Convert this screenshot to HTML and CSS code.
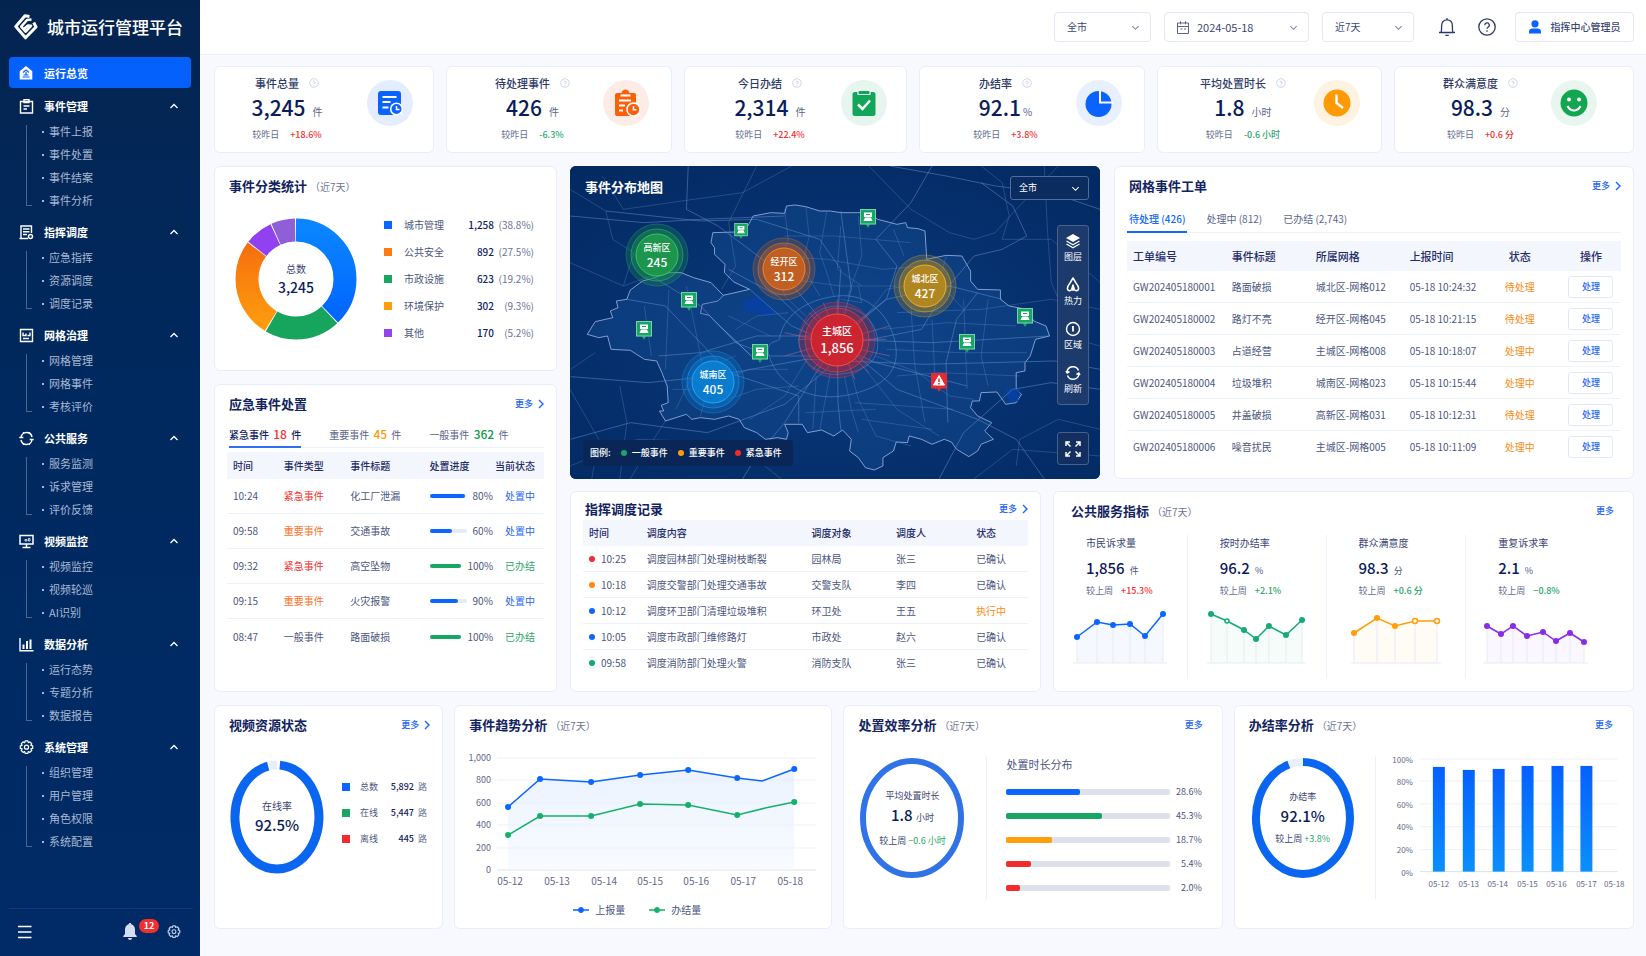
FILE: index.html
```html
<!DOCTYPE html>
<html lang="zh-CN">
<head>
    <meta charset="UTF-8">
    <meta name="viewport" content="width=device-width, initial-scale=1.0">
    <title>城市运行管理平台</title>
    <link rel="stylesheet" href="styles.css">
</head>
<body>
    <svg class="sprite" aria-hidden="true">
        <symbol id="up" viewBox="0 0 10 10"><path d="M1.5 7 5 3.5 8.500 7" fill="none" stroke="currentColor" stroke-width="1.300"/></symbol>
        <symbol id="down" viewBox="0 0 10 10"><path d="M1.500 3.500 5 7 8.500 3.500" fill="none" stroke="currentColor" stroke-width="1.200"/></symbol>
        <symbol id="right" viewBox="0 0 6 10"><path d="M1 1 5 5 1 9" fill="none" stroke="currentColor" stroke-width="1.400"/></symbol>
        <symbol id="help" viewBox="0 0 10 10"><circle cx="5" cy="5" r="4.300" fill="none" stroke="currentColor" stroke-width=".8"/><path d="M3.800 4.200a1.200 1.200 0 1 1 1.200 1.300v.6M5 7v.8" fill="none" stroke="currentColor" stroke-width=".8"/></symbol>
        <symbol id="gear" viewBox="0 0 16 16"><path d="M6.600 1h2.800l.5 1.900 1.700-.9 2 2-.9 1.700 1.900.5v2.800l-1.900.5.900 1.700-2 2-1.700-.9-.5 1.900H6.600l-.5-1.900-1.700.9-2-2 .9-1.700L1.400 9V6.200l1.900-.5-.9-1.700 2-2 1.700.9z" fill="none" stroke="currentColor" stroke-width="1.300" stroke-linejoin="round"/><circle cx="8" cy="7.600" r="2.200" fill="none" stroke="currentColor" stroke-width="1.300"/></symbol>
        <symbol id="pin" viewBox="0 0 16 20"><path d="M0 0h16v15.500h-6L8 19l-2-3.500H0z" fill="currentColor"/><rect x=".5" y=".5" width="15" height="14.500" fill="none" stroke="#fff" stroke-opacity=".45"/><path d="M4 3.500h8v4.500H4zM6 9h4M3.500 12l1.500-3.500h6l1.500 3.500z" fill="#fff"/><path d="M6 5.500h4" stroke="currentColor"/></symbol>
    </svg>

    <aside class="sidebar">
        <div class="brand">
            <svg width="24" height="26" viewBox="0 0 24 26" fill="none" stroke="#fff" stroke-linejoin="round"><path d="M15.500 2.500 11 1.800 1.800 12.500l9.700 11.300L22 13l-2.300-4.500" stroke-width="3"/><path d="M17.500 5.500 13 6 7.200 12.600l4.500 5 5.300-5.800-3-.3-3.500 3" stroke-width="2.600"/></svg>
            <span>城市运行管理平台</span>
        </div>
        <nav class="menu">
            <a class="menu-home" href="#">
                <svg width="14" height="14" viewBox="0 0 14 14"><path d="M7 0 13.300 5.200V13.500H.7V5.200z" fill="#fff"/><path d="M4 6.500 7 4l3 2.500M4.500 9h5M3.500 11h7M7 6v3" fill="none" stroke="#0a5cf5" stroke-width="1.200"/></svg>
                <span>运行总览</span>
            </a>
            <section class="group">
                <button class="group-head" type="button">
                    <svg width="15" height="15" viewBox="0 0 15 15" fill="none" stroke="#fff" stroke-width="1.400"><path d="M1.500 2.500h12V14h-12zM5 .5h5v3H5zM4.500 7h6M4.500 10h3.500"/></svg>
                    <span>事件管理</span><svg class="caret"><use href="#up"/></svg>
                </button>
                <ul><li><a href="#">事件上报</a></li><li><a href="#">事件处置</a></li><li><a href="#">事件结案</a></li><li><a href="#">事件分析</a></li></ul>
            </section>
            <section class="group">
                <button class="group-head" type="button">
                    <svg width="15" height="15" viewBox="0 0 15 15" fill="none" stroke="#fff" stroke-width="1.400"><path d="M8 13.500H2V1h10.500v7M4 4h6.500M4 6.800h6.500M4 9.500h4M.5 13.500H9"/><circle cx="11.500" cy="11.500" r="2"/></svg>
                    <span>指挥调度</span><svg class="caret"><use href="#up"/></svg>
                </button>
                <ul><li><a href="#">应急指挥</a></li><li><a href="#">资源调度</a></li><li><a href="#">调度记录</a></li></ul>
            </section>
            <section class="group">
                <button class="group-head" type="button">
                    <svg width="15" height="15" viewBox="0 0 15 15" fill="none" stroke="#fff" stroke-width="1.400"><path d="M1.500 1.500h12v12h-12zM4 4.500v3h3v-2M8.500 7.500h2.500v-3M4 10.500h6"/></svg>
                    <span>网格治理</span><svg class="caret"><use href="#up"/></svg>
                </button>
                <ul><li><a href="#">网格管理</a></li><li><a href="#">网格事件</a></li><li><a href="#">考核评价</a></li></ul>
            </section>
            <section class="group">
                <button class="group-head" type="button">
                    <svg width="15" height="15" viewBox="0 0 15 15" fill="none" stroke="#fff" stroke-width="1.500"><path d="M2 6.500C2.300 3.800 4.500 1.500 7.500 1.500s5 2 5.500 4.500M13 8.500c-.3 2.700-2.500 5-5.500 5s-5-2-5.500-4.500M.3 6.500h4M10.700 8.500h4"/><path d="M4.500 1v2M10.500 1v2M4.500 12v2M10.500 12v2" stroke-width="1.200"/></svg>
                    <span>公共服务</span><svg class="caret"><use href="#up"/></svg>
                </button>
                <ul><li><a href="#">服务监测</a></li><li><a href="#">诉求管理</a></li><li><a href="#">评价反馈</a></li></ul>
            </section>
            <section class="group">
                <button class="group-head" type="button">
                    <svg width="15" height="15" viewBox="0 0 15 15" fill="none" stroke="#fff" stroke-width="1.500"><path d="M1 1.500h13v8.500H1zM3.500 13.500h8M7.500 10v3"/><path d="M6 5.500h2v1.500H6zM9.500 4.500h1.500V7H9.500z" stroke-width=".8"/></svg>
                    <span>视频监控</span><svg class="caret"><use href="#up"/></svg>
                </button>
                <ul><li><a href="#">视频监控</a></li><li><a href="#">视频轮巡</a></li><li><a href="#">AI识别</a></li></ul>
            </section>
            <section class="group">
                <button class="group-head" type="button">
                    <svg width="15" height="15" viewBox="0 0 15 15" fill="none" stroke="#fff"><path d="M1 1v12.700h13.500" stroke-width="1.400"/><path d="M4.500 7.500V12M8 4v8M11.500 2.500V12" stroke-width="2"/></svg>
                    <span>数据分析</span><svg class="caret"><use href="#up"/></svg>
                </button>
                <ul><li><a href="#">运行态势</a></li><li><a href="#">专题分析</a></li><li><a href="#">数据报告</a></li></ul>
            </section>
            <section class="group">
                <button class="group-head" type="button">
                    <svg width="15" height="15"><use href="#gear"/></svg>
                    <span>系统管理</span><svg class="caret"><use href="#up"/></svg>
                </button>
                <ul><li><a href="#">组织管理</a></li><li><a href="#">用户管理</a></li><li><a href="#">角色权限</a></li><li><a href="#">系统配置</a></li></ul>
            </section>
        </nav>
        <div class="side-foot">
            <button type="button" class="icon-btn" aria-label="收起菜单"><svg width="14" height="14" viewBox="0 0 14 14"><path d="M0 1.500h13.500M0 7h13.500M0 12.500h13.500" stroke="#fff" stroke-width="1.600"/></svg></button>
            <button type="button" class="icon-btn side-bell" aria-label="消息">
                <svg width="14" height="17" viewBox="0 0 14 17" fill="#d4def2"><path d="M7 0c.8 0 1.300.5 1.300 1.300C10.800 1.900 12 4 12 6.500v4.500l1.700 2v1H.3v-1L2 11V6.500C2 4 3.200 1.900 5.700 1.300 5.700.5 6.200 0 7 0zM5 15h4a2 2 0 0 1-4 0z"/></svg>
                <span class="badge">12</span>
            </button>
            <button type="button" class="icon-btn side-gear" aria-label="设置"><svg width="14" height="14"><use href="#gear"/></svg></button>
        </div>
    </aside>

    <div class="page">
        <header class="topbar">
            <label class="picker picker-city"><select aria-label="区域"><option>全市</option></select><svg class="picker-arrow"><use href="#down"/></svg></label>
            <label class="picker picker-date">
                <svg class="picker-icon" width="12" height="13" viewBox="0 0 12 13" fill="none" stroke="#59638a"><path d="M.5 2h11v10.500H.5zM.5 5.500h11M3.500.3v3M8.500.3v3M3.500 8h2M7 8h2"/></svg>
                <input type="text" value="2024-05-18" aria-label="日期"><svg class="picker-arrow"><use href="#down"/></svg>
            </label>
            <label class="picker picker-range"><select aria-label="时间范围"><option>近7天</option></select><svg class="picker-arrow"><use href="#down"/></svg></label>
            <button type="button" class="icon-btn top-bell" aria-label="通知"><svg width="18" height="20" viewBox="0 0 18 20" fill="none" stroke="#2c3968" stroke-width="1.300"><path d="M1 15.500h16M3 15.500c.6-1 .6-2 .6-6.500C3.600 5.300 5.700 2.800 9 2.800s5.400 2.500 5.400 6.200c0 4.500 0 5.500.6 6.500M9 2.800V1M7.300 18.300h3.400"/></svg></button>
            <button type="button" class="icon-btn top-help" aria-label="帮助"><svg width="18" height="18" viewBox="0 0 18 18" fill="none" stroke="#2c3968" stroke-width="1.300"><circle cx="9" cy="9" r="8.200"/><path d="M6.700 7.200a2.300 2.300 0 1 1 3.300 2c-.7.4-1 .8-1 1.600M9 12.300v1.400"/></svg></button>
            <button type="button" class="user"><svg width="12" height="14" viewBox="0 0 12 14" fill="#0a62ff"><circle cx="6" cy="3.800" r="3.600"/><path d="M0 13.500V11.500C0 9.700 1.500 8.500 3.500 8.500h5c2 0 3.500 1.200 3.500 3v2z"/></svg>指挥中心管理员</button>
        </header>

        <main class="content">
            <section class="kpis">
                <article class="card kpi">
                    <div class="kpi-text">
                        <h2>事件总量<svg class="hint"><use href="#help"/></svg></h2>
                        <p class="kpi-num"><b>3,245</b>件</p>
                        <p class="delta">较昨日<span class="red">+18.6%</span></p>
                    </div>
                    <svg class="kpi-icon" viewBox="0 0 46 46"><circle cx="23" cy="23" r="23" fill="#e4edfd"/><rect x="11" y="11" width="23" height="24" rx="3" fill="#0a62ff"/><path d="M15.500 17h14M15.500 22h8M15.500 27.500h6" stroke="#fff" stroke-width="2"/><circle cx="29.500" cy="29" r="5.800" fill="#0a62ff" stroke="#fff" stroke-width="1.600"/><path d="M29.500 26v3.500h3M33 32.500l2.500 2.500" fill="none" stroke="#fff" stroke-width="1.500"/></svg>
                </article>
                <article class="card kpi">
                    <div class="kpi-text">
                        <h2>待处理事件<svg class="hint"><use href="#help"/></svg></h2>
                        <p class="kpi-num"><b>426</b>件</p>
                        <p class="delta">较昨日<span class="green">-6.3%</span></p>
                    </div>
                    <svg class="kpi-icon" viewBox="0 0 46 46"><circle cx="23" cy="23" r="23" fill="#fdece6"/><path d="M14 13h4.500c.5-2 2-3.500 4-3.500s3.500 1.500 4 3.500H31q2 0 2 2v19q0 2-2 2H14q-2 0-2-2V15q0-2 2-2z" fill="#fb5f0c"/><path d="M17.500 15.500h10M16 20.500h12M16 25.500h6M16 30.500h4" stroke="#fff" stroke-width="1.800"/><circle cx="30.500" cy="29.500" r="6.500" fill="#fb5f0c" stroke="#fff" stroke-width="1.500"/><path d="M30.500 26v3.700h3" fill="none" stroke="#fff" stroke-width="1.500"/></svg>
                </article>
                <article class="card kpi">
                    <div class="kpi-text">
                        <h2>今日办结<svg class="hint"><use href="#help"/></svg></h2>
                        <p class="kpi-num"><b>2,314</b>件</p>
                        <p class="delta">较昨日<span class="red">+22.4%</span></p>
                    </div>
                    <svg class="kpi-icon" viewBox="0 0 46 46"><circle cx="23" cy="23" r="23" fill="#e6f5ee"/><rect x="11.500" y="12" width="23" height="24" rx="2.500" fill="#12a65b"/><path d="M17 10.500h12v4H17z" fill="#12a65b" stroke="#e6f5ee" stroke-width="1.200"/><path d="m17 24.500 4.500 4.500 7.500-8.500" fill="none" stroke="#fff" stroke-width="2.500"/></svg>
                </article>
                <article class="card kpi">
                    <div class="kpi-text">
                        <h2>办结率<svg class="hint"><use href="#help"/></svg></h2>
                        <p class="kpi-num percent"><b>92.1</b>%</p>
                        <p class="delta">较昨日<span class="red">+3.8%</span></p>
                    </div>
                    <svg class="kpi-icon" viewBox="0 0 46 46"><circle cx="23" cy="23" r="23" fill="#e8effd"/><circle cx="22.500" cy="24" r="13" fill="#0a62ff"/><path d="M24 10v12.500h13" fill="none" stroke="#fff" stroke-width="2"/></svg>
                </article>
                <article class="card kpi">
                    <div class="kpi-text">
                        <h2>平均处置时长<svg class="hint"><use href="#help"/></svg></h2>
                        <p class="kpi-num"><b>1.8</b>小时</p>
                        <p class="delta">较昨日<span class="green">-0.6 小时</span></p>
                    </div>
                    <svg class="kpi-icon" viewBox="0 0 46 46"><circle cx="23" cy="23" r="23" fill="#fef2e0"/><circle cx="23" cy="23" r="13.500" fill="#ff9a05"/><path d="M22.500 14.500V23l6.500 5" fill="none" stroke="#fff" stroke-width="2.400"/></svg>
                </article>
                <article class="card kpi">
                    <div class="kpi-text">
                        <h2>群众满意度<svg class="hint"><use href="#help"/></svg></h2>
                        <p class="kpi-num"><b>98.3</b>分</p>
                        <p class="delta">较昨日<span class="red">+0.6 分</span></p>
                    </div>
                    <svg class="kpi-icon" viewBox="0 0 46 46"><circle cx="23" cy="23" r="23" fill="#e9f6ef"/><circle cx="23" cy="23" r="13.500" fill="#12a650"/><circle cx="18" cy="19.500" r="2" fill="#fff"/><circle cx="28" cy="19.500" r="2" fill="#fff"/><path d="M16.500 26c3 6 10 6 13 0" fill="none" stroke="#fff" stroke-width="2"/></svg>
                </article>
            </section>

            <section class="middle">
                <div class="left-col">
                    <article class="card">
                        <header class="card-head"><h3>事件分类统计<small>（近7天）</small></h3></header>
                        <div class="category">
                            <div class="ring-box">
                                <svg width="124" height="124" viewBox="0 0 124 124">
                                    <defs>
                                        <linearGradient id="gBlue" x1="1" x2="0"><stop stop-color="#0a84ff"/><stop offset="1" stop-color="#0062ff"/></linearGradient>
                                        <linearGradient id="gOrange" x1="0" x2="1"><stop stop-color="#ff9d0d"/><stop offset="1" stop-color="#f4660f"/></linearGradient>
                                    </defs>
                                    <g class="slices" fill="none" stroke-width="23" transform="rotate(-90 62 62)">
                                        <circle cx="62" cy="62" r="49" pathLength="360" stroke="url(#gBlue)" stroke-dasharray="136 224"/>
                                        <circle cx="62" cy="62" r="49" pathLength="360" stroke="#17a45c" stroke-dasharray="73 287" stroke-dashoffset="-137"/>
                                        <circle cx="62" cy="62" r="49" pathLength="360" stroke="url(#gOrange)" stroke-dasharray="96 264" stroke-dashoffset="-211"/>
                                        <circle cx="62" cy="62" r="49" pathLength="360" stroke="#9141f0" stroke-dasharray="27 333" stroke-dashoffset="-308"/>
                                        <circle cx="62" cy="62" r="49" pathLength="360" stroke="#8f5fd8" stroke-dasharray="23 337" stroke-dashoffset="-336"/>
                                    </g>
                                </svg>
                                <div class="ring-text"><span>总数</span><b class="mid">3,245</b></div>
                            </div>
                            <ul class="legend">
                                <li><i class="sq bg-blue"></i><span>城市管理</span><b>1,258</b><em>(38.8%)</em></li>
                                <li><i class="sq bg-orange"></i><span>公共安全</span><b>892</b><em>(27.5%)</em></li>
                                <li><i class="sq bg-green"></i><span>市政设施</span><b>623</b><em>(19.2%)</em></li>
                                <li><i class="sq bg-amber"></i><span>环境保护</span><b>302</b><em>(9.3%)</em></li>
                                <li><i class="sq bg-purple"></i><span>其他</span><b>170</b><em>(5.2%)</em></li>
                            </ul>
                        </div>
                    </article>

                    <article class="card grow">
                        <header class="card-head"><h3>应急事件处置</h3><a class="more" href="#">更多<svg><use href="#right"/></svg></a></header>
                        <div class="tabs tabs-count">
                            <button type="button" class="active">紧急事件 <b class="red">18</b> 件</button>
                            <button type="button">重要事件 <b class="amber">45</b> 件</button>
                            <button type="button">一般事件 <b class="green-d">362</b> 件</button>
                        </div>
                        <table class="table emergency">
                            <colgroup><col class="c-time"><col class="c-type"><col class="c-title"><col class="c-prog"><col class="c-state"></colgroup>
                            <thead><tr><th>时间</th><th>事件类型</th><th>事件标题</th><th>处置进度</th><th>当前状态</th></tr></thead>
                            <tbody>
                                <tr><td>10:24</td><td class="red">紧急事件</td><td>化工厂泄漏</td><td><div class="prog"><i><s class="bg-blue" style="width:95%"></s></i>80%</div></td><td class="blue">处置中</td></tr>
                                <tr><td>09:58</td><td class="orange">重要事件</td><td>交通事故</td><td><div class="prog"><i><s class="bg-blue" style="width:62%"></s></i>60%</div></td><td class="blue">处置中</td></tr>
                                <tr><td>09:32</td><td class="red">紧急事件</td><td>高空坠物</td><td><div class="prog"><i><s class="bg-green" style="width:100%"></s></i>100%</div></td><td class="green">已办结</td></tr>
                                <tr><td>09:15</td><td class="orange">重要事件</td><td>火灾报警</td><td><div class="prog"><i><s class="bg-blue" style="width:78%"></s></i>90%</div></td><td class="blue">处置中</td></tr>
                                <tr><td>08:47</td><td>一般事件</td><td>路面破损</td><td><div class="prog"><i><s class="bg-green" style="width:100%"></s></i>100%</div></td><td class="green">已办结</td></tr>
                            </tbody>
                        </table>
                    </article>
                </div>

                <div class="right-col">
                    <div class="row-map">
                        <article class="map">
                            <svg class="map-canvas" viewBox="0 0 530 313" preserveAspectRatio="xMidYMid slice">
                                <defs>
                                    <radialGradient id="mapBg" cx=".5" cy=".55" r=".7"><stop stop-color="#093a7e"/><stop offset="1" stop-color="#032a62"/></radialGradient>
                                </defs>
                                <rect width="530" height="313" fill="url(#mapBg)"/>
                                <g class="roads" transform="scale(.3508 .3333) translate(-28 -30)">
                                    <path class="district" d="M77 535 110 545 135 540 145 580 200 583 240 610 275 615 290 650 305 690 308 740 288 748 295 765 283 765 300 795 330 785 360 775 375 790 400 785 440 790 480 780 510 790 525 815 560 830 585 850 620 845 645 850 650 830 640 805 690 805 705 830 745 822 780 840 805 822 830 850 825 885 850 905 870 935 895 942 920 930 920 905 950 885 958 858 990 860 995 840 1030 850 1060 865 1095 850 1115 858 1130 880 1165 902 1190 885 1200 865 1235 850 1210 825 1230 800 1190 780 1170 755 1175 735 1195 735 1200 710 1245 708 1270 745 1300 740 1315 715 1300 700 1300 650 1325 645 1325 620 1340 600 1355 550 1395 540 1385 510 1350 495 1330 460 1280 450 1255 430 1255 402 1190 400 1170 375 1170 345 1145 300 1100 298 1045 310 1040 225 1020 218 990 215 985 200 960 205 905 190 880 170 800 170 770 165 740 165 700 152 670 147 645 150 640 172 600 170 550 180 535 210 500 228 435 230 430 260 440 275 440 295 470 325 468 350 495 378 540 400 465 418 430 380 380 365 345 350 310 350 260 368 235 375 200 402 190 430 160 435 165 455 143 465 150 485 100 497z"/>
                                    <path class="edge" d="M465 418 450 435 405 445 400 472 425 478 445 500 490 545 545 600"/>
                                    <path class="water" d="M520 440 560 420 620 470 600 480 530 465zM1270 695 1312 698 1305 735 1280 740z"/>
                                    <path class="main" d="M625 550C635 480 700 430 790 420S940 480 955 560 930 690 830 715 640 700 605 625 620 560 625 550zM680 550C690 500 730 450 790 450S900 490 905 555 860 650 790 655 680 600 680 550zM30 662 250 680 440 660 700 610 1040 625 1410 615 1539 640M30 850 200 800 420 830 640 745 760 640 830 520 930 430 1110 390 1260 430M130 165 400 195 560 190 740 250 800 340 790 500 792 740 800 822M365 30 360 160 450 210 640 360 790 550 960 700 1190 790 1300 850 1380 969M790 550 1060 560 1395 540M480 340 620 420 720 520M540 400 660 510 900 620 1160 690M800 165 830 400 790 550 700 700 640 800 560 900 520 969M1060 30 1000 140 900 250 960 330 930 430 830 510M28 180 240 200 400 190 640 180M190 430 300 450 400 560 480 650 680 720 680 800M260 360 400 450 500 560 600 600 780 600M1539 160 1400 110 1240 90 1100 60 940 30M1200 80 1290 150 1330 240 1260 280 1180 300 1100 400 1030 520 840 560M1539 700 1400 680 1290 700 1150 830 1080 969M1190 410 1130 490 1100 620 1105 800M280 600 400 590 560 540 720 540"/>
                                    <path class="minor" d="M28 100 130 165 150 250 210 290 180 390M28 320 180 390 260 360M28 700 110 850 90 969M200 969 260 860 300 795M28 930 220 850 500 860 630 969M120 60 180 160 380 130 520 110 660 30M560 30 480 200 500 330 460 400M880 30 1000 160 1110 230 1180 250 1240 230 1300 160 1420 30M1200 30 1260 80 1280 180 1260 250 1400 250 1539 380M1539 460 1400 430 1200 460 960 470M1539 820 1420 790 1310 850 1300 930M1180 969 1290 880 1539 900M1380 30 1390 240 1400 380 1470 550 1539 570M100 590 30 640M170 690 190 800 170 969M640 160 650 250 620 340 640 420M700 150 710 240 690 330 740 420M760 165 740 290 760 350 780 420M850 180 860 300 820 420M640 240 780 240 1000 260M600 300 760 310 920 340 1040 330M660 370 800 390 960 390M730 660 720 820M830 650 850 730 900 840 1000 870M870 640 960 760 1080 840M900 600 1020 650 1110 720 1180 730M920 520 1100 500 1300 510M930 580 1140 590 1330 590M960 660 1080 650 1310 660M1000 450 1010 620 1040 800M1060 490 1070 700M1150 430 1160 700M1220 430 1200 600 1220 690M680 690 560 700 450 740M650 640 540 640 400 700 320 700M650 470 560 480 500 520M700 480 640 420M880 470 930 400 1040 380M710 600 640 720 540 790M770 650 740 820M810 660 830 760 850 830M600 540 480 480M500 600 380 650 330 760M240 450 260 600M310 400 300 640M360 390 420 700 400 780M840 740 1120 760M860 790 1060 820M700 770 900 760M1100 300 1080 380 1150 460M950 220 980 300M800 210 790 340 860 390M850 390 860 440 800 430"/>
                                    <path class="spokes" d="M790 430V660M680 550H930M710 470 880 650M720 640 880 470M750 440 840 670M640 530 940 600M640 600 940 510"/>
                                </g>
                                <g class="bubble b-green" transform="translate(87 89)"><circle class="o2" r="31"/><circle class="o1" r="26"/><circle class="core" r="21"/><text y="-4">高新区</text><text class="n" y="12">245</text></g>
                                <g class="bubble b-orange" transform="translate(214 103)"><circle class="o2" r="31"/><circle class="o1" r="26"/><circle class="core" r="21"/><text y="-4">经开区</text><text class="n" y="12">312</text></g>
                                <g class="bubble b-gold" transform="translate(355 120)"><circle class="o2" r="31"/><circle class="o1" r="26"/><circle class="core" r="21"/><text y="-4">城北区</text><text class="n" y="12">427</text></g>
                                <g class="bubble b-red big" transform="translate(267 174)"><circle class="o2" r="38"/><circle class="o1" r="32"/><circle class="core" r="26"/><text y="-5">主城区</text><text class="n" y="13">1,856</text></g>
                                <g class="bubble b-blue" transform="translate(143 216)"><circle class="o2" r="31"/><circle class="o1" r="26"/><circle class="core" r="21"/><text y="-4">城南区</text><text class="n" y="12">405</text></g>
                                <g color="#16a765">
                                    <use href="#pin" x="164" y="57" width="14" height="17"/>
                                    <use href="#pin" x="290" y="43" width="16" height="20"/>
                                    <use href="#pin" x="111" y="126" width="16" height="20"/>
                                    <use href="#pin" x="66" y="155" width="16" height="20"/>
                                    <use href="#pin" x="182" y="178" width="16" height="20"/>
                                    <use href="#pin" x="447" y="142" width="16" height="20"/>
                                    <use href="#pin" x="389" y="168" width="16" height="20"/>
                                </g>
                                <g transform="translate(361 207)"><path d="M0 0h16v15.500h-6L8 19l-2-3.500H0z" fill="#e52a32"/><path d="M8 2.500 13.500 12h-11z" fill="#fff" stroke="#fff" stroke-linejoin="round"/><path d="M8 5.500v3.500M8 10v1.500" stroke="#e52a32" stroke-width="1.500"/></g>
                            </svg>
                            <h3>事件分布地图</h3>
                            <label class="map-select"><select aria-label="地图区域"><option>全市</option></select><svg class="picker-arrow"><use href="#down"/></svg></label>
                            <div class="map-tools">
                                <button type="button"><svg width="16" height="16" viewBox="0 0 16 16"><path d="M8 1 15 5 8 9 1 5z" fill="#fff"/><path d="m1.500 8 6.500 3.700L14.500 8M1.500 11 8 14.700 14.500 11" fill="none" stroke="#fff" stroke-width="1.300"/></svg>图层</button>
                                <button type="button"><svg width="16" height="16" viewBox="0 0 16 16" fill="none" stroke="#fff" stroke-width="1.500" stroke-linejoin="round"><path d="M8 1 5 6C3 8.500 2 10 2.500 12c.6 2.200 3.500 2.200 4.200.2L8 8l1.300 4.200c.7 2 3.600 2 4.200-.2.5-2-.5-3.500-2.500-6zM8 8v6"/></svg>热力</button>
                                <button type="button"><svg width="16" height="16" viewBox="0 0 16 16" fill="none" stroke="#fff" stroke-width="1.400"><circle cx="8" cy="8" r="6.500"/><path d="M8 5v5.500M7 6h1" stroke-width="1.800"/></svg>区域</button>
                                <button type="button"><svg width="16" height="16" viewBox="0 0 16 16" fill="none" stroke="#fff" stroke-width="1.500"><path d="M2 7a6 6 0 0 1 11.500-1.500M14 9a6 6 0 0 1-11.500 1.500M1 6l1.200 2L4.500 6.500M15 10l-1.200-2-2.300 1.500"/></svg>刷新</button>
                            </div>
                            <button type="button" class="map-full" aria-label="全屏"><svg width="16" height="16" viewBox="0 0 16 16" fill="none" stroke="#fff" stroke-width="1.500"><path d="M1 5V1h4M1 1l4.500 4.500M11 1h4v4M15 1l-4.500 4.500M1 11v4h4M1 15l4.500-4.500M15 11v4h-4M15 15l-4.500-4.500"/></svg></button>
                            <div class="map-legend"><span>图例:</span><span><i class="dot bg-green"></i>一般事件</span><span><i class="dot bg-amber"></i>重要事件</span><span><i class="dot bg-red"></i>紧急事件</span></div>
                        </article>

                        <article class="card">
                            <header class="card-head"><h3>网格事件工单</h3><a class="more" href="#">更多<svg><use href="#right"/></svg></a></header>
                            <div class="tabs tabs-order">
                                <button type="button" class="active">待处理 (426)</button>
                                <button type="button">处理中 (812)</button>
                                <button type="button">已办结 (2,743)</button>
                            </div>
                            <table class="table orders">
                                <colgroup><col class="o-id"><col class="o-title"><col class="o-grid"><col class="o-time"><col class="o-state"><col class="o-act"></colgroup>
                                <thead><tr><th>工单编号</th><th>事件标题</th><th>所属网格</th><th>上报时间</th><th>状态</th><th>操作</th></tr></thead>
                                <tbody>
                                    <tr><td>GW202405180001</td><td>路面破损</td><td>城北区-网格012</td><td>05-18 10:24:32</td><td class="tangerine">待处理</td><td><button type="button">处理</button></td></tr>
                                    <tr><td>GW202405180002</td><td>路灯不亮</td><td>经开区-网格045</td><td>05-18 10:21:15</td><td class="tangerine">待处理</td><td><button type="button">处理</button></td></tr>
                                    <tr><td>GW202405180003</td><td>占道经营</td><td>主城区-网格008</td><td>05-18 10:18:07</td><td class="tangerine">处理中</td><td><button type="button">处理</button></td></tr>
                                    <tr><td>GW202405180004</td><td>垃圾堆积</td><td>城南区-网格023</td><td>05-18 10:15:44</td><td class="tangerine">处理中</td><td><button type="button">处理</button></td></tr>
                                    <tr><td>GW202405180005</td><td>井盖破损</td><td>高新区-网格031</td><td>05-18 10:12:31</td><td class="tangerine">待处理</td><td><button type="button">处理</button></td></tr>
                                    <tr><td>GW202405180006</td><td>噪音扰民</td><td>主城区-网格005</td><td>05-18 10:11:09</td><td class="tangerine">处理中</td><td><button type="button">处理</button></td></tr>
                                </tbody>
                            </table>
                        </article>
                    </div>

                    <div class="row-service">
                        <article class="card tight">
                            <header class="card-head"><h3>指挥调度记录</h3><a class="more" href="#">更多<svg><use href="#right"/></svg></a></header>
                            <table class="table dispatch">
                                <colgroup><col class="d-time"><col class="d-text"><col class="d-obj"><col class="d-who"><col class="d-state"></colgroup>
                                <thead><tr><th>时间</th><th>调度内容</th><th>调度对象</th><th>调度人</th><th>状态</th></tr></thead>
                                <tbody>
                                    <tr><td><i class="dot bg-red"></i>10:25</td><td>调度园林部门处理树枝断裂</td><td>园林局</td><td>张三</td><td>已确认</td></tr>
                                    <tr><td><i class="dot bg-tangerine"></i>10:18</td><td>调度交警部门处理交通事故</td><td>交警支队</td><td>李四</td><td>已确认</td></tr>
                                    <tr><td><i class="dot bg-blue"></i>10:12</td><td>调度环卫部门清理垃圾堆积</td><td>环卫处</td><td>王五</td><td class="tangerine">执行中</td></tr>
                                    <tr><td><i class="dot bg-blue"></i>10:05</td><td>调度市政部门维修路灯</td><td>市政处</td><td>赵六</td><td>已确认</td></tr>
                                    <tr><td><i class="dot bg-teal"></i>09:58</td><td>调度消防部门处理火警</td><td>消防支队</td><td>张三</td><td>已确认</td></tr>
                                </tbody>
                            </table>
                        </article>

                        <article class="card service">
                            <header class="card-head"><h3>公共服务指标<small>（近7天）</small></h3><a class="more plain" href="#">更多</a></header>
                            <div class="metrics">
                                <div class="metric">
                                    <h4>市民诉求量</h4>
                                    <p class="metric-num"><b>1,856</b>件</p>
                                    <p class="delta">较上周<span class="red">+15.3%</span></p>
                                    <svg class="spark s-blue" width="110" height="58" viewBox="0 0 110 58">
                                        <path class="area" d="M7 30 27 15 43 18 60 17 75 29 93 7V56H7z"/><path class="rule" d="M7 30V56M27 15V56M43 18V56M60 17V56M75 29V56M93 7V56M3 56H97"/>
                                        <path class="line" d="M7 30 27 15 43 18 60 17 75 29 93 7"/>
                                        <circle cx="7" cy="30" r="3"/><circle cx="27" cy="15" r="3"/><circle cx="43" cy="18" r="3"/><circle cx="60" cy="17" r="3"/><circle cx="75" cy="29" r="3"/><circle cx="93" cy="7" r="3"/>
                                    </svg>
                                </div>
                                <div class="metric">
                                    <h4>按时办结率</h4>
                                    <p class="metric-num"><b>96.2</b>%</p>
                                    <p class="delta">较上周<span class="green">+2.1%</span></p>
                                    <svg class="spark s-green" width="110" height="58" viewBox="0 0 110 58">
                                        <path class="area" d="M7 7 23 14 40 23 52 32 65 19 82 28 98 13V56H7z"/><path class="rule" d="M7 7V56M23 14V56M40 23V56M52 32V56M65 19V56M82 28V56M98 13V56M3 56H102"/>
                                        <path class="line" d="M7 7 23 14 40 23 52 32 65 19 82 28 98 13"/>
                                        <circle cx="7" cy="7" r="3"/><circle class="hollow" cx="23" cy="14" r="2"/><circle cx="40" cy="23" r="3"/><circle cx="52" cy="32" r="3"/><circle cx="65" cy="19" r="3"/><circle cx="82" cy="28" r="3"/><circle cx="98" cy="13" r="3"/>
                                    </svg>
                                </div>
                                <div class="metric">
                                    <h4>群众满意度</h4>
                                    <p class="metric-num"><b>98.3</b>分</p>
                                    <p class="delta">较上周<span class="green">+0.6 分</span></p>
                                    <svg class="spark s-amber" width="110" height="58" viewBox="0 0 110 58">
                                        <path class="area" d="M11 26 34 11 52 19 72 14 94 14V56H11z"/><path class="rule" d="M11 26V56M34 11V56M52 19V56M72 14V56M94 14V56M8 56H98"/>
                                        <path class="line" d="M11 26 34 11 52 19 72 14 94 14"/>
                                        <circle cx="11" cy="26" r="3"/><circle cx="34" cy="11" r="3"/><circle cx="52" cy="19" r="3"/><circle class="hollow" cx="72" cy="14" r="2.500"/><circle class="hollow" cx="94" cy="14" r="2.500"/>
                                    </svg>
                                </div>
                                <div class="metric">
                                    <h4>重复诉求率</h4>
                                    <p class="metric-num"><b>2.1</b>%</p>
                                    <p class="delta">较上周<span class="green">−0.8%</span></p>
                                    <svg class="spark s-purple" width="110" height="58" viewBox="0 0 110 58">
                                        <path class="area" d="M5 19 19 27 31 19 45 29 61 25 74 34 88 26 102 35V56H5z"/><path class="rule" d="M5 19V56M19 27V56M31 19V56M45 29V56M61 25V56M74 34V56M88 26V56M102 35V56M1 56H106"/>
                                        <path class="line" d="M5 19 19 27 31 19 45 29 61 25 74 34 88 26 102 35"/>
                                        <circle cx="5" cy="19" r="3"/><circle cx="19" cy="27" r="3"/><circle cx="31" cy="19" r="3"/><circle cx="45" cy="29" r="3"/><circle cx="61" cy="25" r="3"/><circle cx="74" cy="34" r="3"/><circle cx="88" cy="26" r="3"/><circle cx="102" cy="35" r="3"/>
                                    </svg>
                                </div>
                            </div>
                        </article>
                    </div>
                </div>
            </section>

            <section class="bottom">
                <article class="card">
                    <header class="card-head"><h3>视频资源状态</h3><a class="more" href="#">更多<svg><use href="#right"/></svg></a></header>
                    <div class="video">
                        <div class="ring-box">
                            <svg width="96" height="116" viewBox="0 0 96 116" fill="none" stroke-width="9">
                                <ellipse cx="48" cy="58" rx="42" ry="52" stroke="#e6eefb"/>
                                <path d="M48 6a42 52 0 1 1-.1 0" pathLength="100" stroke="#fff" stroke-dasharray="97.500 100" stroke-width="10"/>
                                <path d="M48 6a42 52 0 1 1-.1 0" pathLength="100" stroke="#0a66f0" stroke-dasharray="96 100" stroke-dashoffset="-1"/>
                            </svg>
                            <div class="ring-text"><span>在线率</span><b>92.5%</b></div>
                        </div>
                        <ul class="legend">
                            <li><i class="sq bg-blue"></i><span>总数</span><b>5,892</b><em>路</em></li>
                            <li><i class="sq bg-green"></i><span>在线</span><b>5,447</b><em>路</em></li>
                            <li><i class="sq bg-red"></i><span>离线</span><b>445</b><em>路</em></li>
                        </ul>
                    </div>
                </article>

                <article class="card">
                    <header class="card-head"><h3>事件趋势分析<small>（近7天）</small></h3></header>
                    <svg class="chart trend" viewBox="0 0 352 142">
                        <defs><linearGradient id="gArea" x2="0" y2="1"><stop stop-color="#e2edff" stop-opacity=".7"/><stop offset="1" stop-color="#f0f6ff" stop-opacity=".5"/></linearGradient></defs>
                        <path class="gridline" d="M30 12H349M30 34H349M30 57H349M30 79H349M30 102H349"/>
                        <path class="axis" d="M30 124H349"/>
                        <path d="M41 61 73 33 124 36 173 29 221 24 270 32 295 35 327 23V124H41z" fill="url(#gArea)"/>
                        <g class="ylab"><text x="24" y="15">1,000</text><text x="24" y="37">800</text><text x="24" y="60">600</text><text x="24" y="82">400</text><text x="24" y="105">200</text><text x="24" y="127">0</text></g>
                        <g class="xlab"><text x="43" y="139">05-12</text><text x="90" y="139">05-13</text><text x="137" y="139">05-14</text><text x="183" y="139">05-15</text><text x="229" y="139">05-16</text><text x="276" y="139">05-17</text><text x="323" y="139">05-18</text></g>
                        <path class="l-blue" d="M41 61 73 33 124 36 173 29 221 24 270 32 295 35 327 23"/>
                        <path class="l-green" d="M41 89 73 70 124 70 173 58 221 59 270 69 298 62 327 56"/>
                        <g fill="#0a66ff"><circle cx="41" cy="61" r="3"/><circle cx="73" cy="33" r="3"/><circle cx="124" cy="36" r="3"/><circle cx="173" cy="29" r="3"/><circle cx="221" cy="24" r="3"/><circle cx="270" cy="32" r="3"/><circle cx="327" cy="23" r="3"/></g>
                        <g fill="#16b06a"><circle cx="41" cy="89" r="3"/><circle cx="73" cy="70" r="3"/><circle cx="124" cy="70" r="3"/><circle cx="173" cy="58" r="3"/><circle cx="221" cy="59" r="3"/><circle cx="270" cy="69" r="3"/><circle cx="327" cy="56" r="3"/></g>
                    </svg>
                    <div class="chart-legend">
                        <span><svg width="16" height="8" viewBox="0 0 16 8" stroke="#0a66ff" fill="#0a66ff"><path d="M0 4h16" stroke-width="1.500"/><circle cx="8" cy="4" r="2.500"/></svg>上报量</span>
                        <span><svg width="16" height="8" viewBox="0 0 16 8" stroke="#16b06a" fill="#16b06a"><path d="M0 4h16" stroke-width="1.500"/><circle cx="8" cy="4" r="2.500"/></svg>办结量</span>
                    </div>
                </article>

                <article class="card">
                    <header class="card-head"><h3>处置效率分析<small>（近7天）</small></h3><a class="more plain" href="#">更多</a></header>
                    <div class="split">
                        <div class="split-ring ring-box">
                            <svg width="106" height="124" viewBox="0 0 106 124" fill="none"><ellipse cx="53" cy="62" rx="49" ry="57" stroke="#2f73e6" stroke-width="6"/></svg>
                            <div class="ring-text three"><span>平均处置时长</span><b>1.8 <small>小时</small></b><p>较上周 <em class="green">−0.6 小时</em></p></div>
                        </div>
                        <div class="split-body">
                            <h4>处置时长分布</h4>
                            <ul class="bars">
                                <li><i><s class="bg-blue" style="width:45%"></s></i>28.6%</li>
                                <li><i><s class="bg-green" style="width:58%"></s></i>45.3%</li>
                                <li><i><s class="bg-amber" style="width:28%"></s></i>18.7%</li>
                                <li><i><s class="bg-red" style="width:15%"></s></i>5.4%</li>
                                <li><i><s class="bg-red" style="width:8%"></s></i>2.0%</li>
                            </ul>
                        </div>
                    </div>
                </article>

                <article class="card rate">
                    <header class="card-head"><h3>办结率分析<small>（近7天）</small></h3><a class="more plain" href="#">更多</a></header>
                    <div class="split">
                        <div class="split-ring ring-box">
                            <svg width="106" height="124" viewBox="0 0 106 124" fill="none" stroke-width="8">
                                <ellipse cx="53" cy="62" rx="47" ry="56" stroke="#e9eff9"/>
                                <path d="M53 6a47 56 0 1 1-.1 0" pathLength="100" stroke="#0a66f0" stroke-dasharray="95.500 100"/>
                            </svg>
                            <div class="ring-text three"><span>办结率</span><b>92.1%</b><p>较上周 <em class="green">+3.8%</em></p></div>
                        </div>
                        <div class="split-chart">
                            <svg class="chart" viewBox="0 0 238 146">
                                <defs><linearGradient id="gBar" x2="0" y2="1"><stop stop-color="#0560ff"/><stop offset="1" stop-color="#0a90ff"/></linearGradient></defs>
                                <path class="gridline" d="M30 13H228M30 35H228M30 58H228M30 81H228M30 104H228"/>
                                <path class="axis" d="M30 126H228"/>
                                <g class="ylab small"><text x="23" y="17">100%</text><text x="23" y="39">80%</text><text x="23" y="62">60%</text><text x="23" y="84">40%</text><text x="23" y="107">20%</text><text x="23" y="130">0%</text></g>
                                <g fill="url(#gBar)"><rect x="43" y="21" width="12" height="105"/><rect x="73" y="24" width="12" height="102"/><rect x="103" y="23" width="12" height="103"/><rect x="132" y="20" width="12" height="106"/><rect x="162" y="20" width="12" height="106"/><rect x="191" y="20" width="12" height="106"/></g>
                                <g class="xlab small"><text x="49" y="141">05-12</text><text x="79" y="141">05-13</text><text x="108" y="141">05-14</text><text x="138" y="141">05-15</text><text x="167" y="141">05-16</text><text x="197" y="141">05-17</text><text x="225" y="141">05-18</text></g>
                            </svg>
                        </div>
                    </div>
                </article>
            </section>
        </main>
    </div>
</body>
</html>
```

FILE: styles.css
```css
* {
    box-sizing: border-box;
}

body {
    margin: 0;
    display: flex;
    min-height: 100vh;
    font-family: "Noto Sans CJK SC", "Noto Sans", sans-serif;
    font-size: 10px;
    line-height: 16px;
    color: #4c5680;
    background-color: #f7f9fe;
}

h2, h3, h4, p, ul {
    margin: 0;
    padding: 0;
}

ul {
    list-style: none;
}

i, em {
    font-style: normal;
}

s {
    text-decoration: none;
}

a {
    text-decoration: none;
}

button, input, select {
    font-family: inherit;
    font-size: inherit;
    line-height: inherit;
    color: inherit;
    margin: 0;
    padding: 0;
    border: none;
    background: none;
}

button {
    cursor: pointer;
}

svg {
    flex: none;
    display: block;
}

.sprite {
    position: absolute;
    width: 0;
    height: 0;
}

/* colours */
.red { color: #f23030; }
.orange { color: #f9722b; }
.tangerine { color: #fa8c16; }
.amber { color: #fa9a0a; }
.green { color: #2aa56a; }
.green-d { color: #129a4a; }
.blue { color: #1f66f5; }
.bg-blue { background-color: #0a66ff; }
.bg-orange { background-color: #ff7a12; }
.bg-tangerine { background-color: #ff8a0c; }
.bg-amber { background-color: #ff9d0a; }
.bg-green { background-color: #17a763; }
.bg-teal { background-color: #12a67c; }
.bg-purple { background-color: #9344f0; }
.bg-red { background-color: #f22c2c; }

/* sidebar */
.sidebar {
    width: 200px;
    flex: none;
    display: flex;
    flex-direction: column;
    color: #fff;
    background: linear-gradient(#042450, #00295f 40%, #002b66);
}

.brand {
    display: flex;
    align-items: center;
    gap: 9px;
    height: 54px;
    padding-left: 14px;
    font-size: 17px;
    font-weight: 500;
    white-space: nowrap;
}

.menu {
    flex: 1;
    padding: 3px 9px 0;
}

.menu-home {
    display: flex;
    align-items: center;
    gap: 11px;
    height: 31px;
    margin-bottom: 6px;
    padding-left: 10px;
    border-radius: 4px;
    background-color: #0561fb;
    color: #fff;
    font-size: 11px;
    font-weight: 700;
}

.group {
    margin-bottom: 8px;
}

.group-head {
    display: flex;
    align-items: center;
    gap: 10px;
    width: 100%;
    height: 24px;
    padding: 0 12px 0 10px;
    font-size: 11px;
    font-weight: 700;
}

.caret {
    width: 10px;
    height: 10px;
    margin-left: auto;
}

.group ul {
    position: relative;
    margin-top: 2px;
    padding-left: 33px;
}

.group ul::before {
    content: "";
    position: absolute;
    left: 17px;
    top: 5px;
    bottom: 6px;
    width: 5px;
    border-left: 1px solid #4a668f;
    border-bottom: 1px solid #4a668f;
}

.group li a {
    display: block;
    height: 23px;
    line-height: 23px;
    font-size: 11px;
    color: #a9b8d3;
}

.group li a::before {
    content: "";
    display: inline-block;
    width: 2px;
    height: 2px;
    margin-right: 5px;
    vertical-align: 3px;
    background-color: #a9b8d3;
}

.side-foot {
    display: flex;
    align-items: center;
    height: 48px;
    margin: 0 7px 0 9px;
    padding: 0 12px 2px 9px;
    border-top: 1px solid #12396f;
}

.icon-btn {
    display: flex;
    align-items: center;
}

.side-bell {
    position: relative;
    margin-left: auto;
    margin-right: 30px;
}

.badge {
    position: absolute;
    left: 16px;
    top: -4px;
    width: 20px;
    height: 14px;
    line-height: 14px;
    border-radius: 7px;
    background-color: #f52d2d;
    font-size: 9px;
    font-weight: 700;
    text-align: center;
}

.side-gear {
    color: #c5d0e6;
}

/* top bar */
.page {
    flex: 1;
    min-width: 0;
    display: flex;
    flex-direction: column;
}

.topbar {
    display: flex;
    align-items: center;
    justify-content: flex-end;
    height: 55px;
    padding-right: 12px;
    background-color: #fff;
    border-bottom: 1px solid #ebeff9;
    color: #3b4672;
}

.picker {
    position: relative;
    display: flex;
    align-items: center;
    height: 30px;
    margin-right: 13px;
    padding: 0 10px 0 12px;
    border: 1px solid #e2e7f3;
    border-radius: 4px;
    font-weight: 500;
}

.picker select,
.picker input,
.map-select select {
    appearance: none;
    flex: 1;
    min-width: 0;
    height: 100%;
    outline: none;
}

.picker input {
    margin-left: 8px;
    font-size: 11px;
}

.picker-city { width: 97px; }
.picker-date { width: 145px; }
.picker-range { width: 92px; margin-right: 24px; }

.picker-arrow {
    width: 9px;
    height: 9px;
    color: #7d87a8;
    pointer-events: none;
}

.top-bell { margin-right: 22px; }
.top-help { margin-right: 19px; }

.user {
    display: flex;
    align-items: center;
    justify-content: center;
    gap: 10px;
    width: 119px;
    height: 30px;
    border: 1px solid #e2e7f3;
    border-radius: 4px;
    font-weight: 500;
    white-space: nowrap;
}

/* cards */
.content {
    display: flex;
    flex-direction: column;
    gap: 13px;
    padding: 11px 12px 20px 14px;
}

.card {
    min-width: 0;
    padding: 10px 12px;
    border: 1px solid #e8edf9;
    border-radius: 6px;
    background-color: #fff;
}

.card-head {
    display: flex;
    align-items: center;
    justify-content: space-between;
    height: 18px;
    padding-left: 2px;
}

.card-head h3,
.map h3 {
    font-size: 13px;
    line-height: 18px;
    font-weight: 700;
    color: #13235f;
    white-space: nowrap;
}

.card-head small {
    margin-left: 3px;
    font-size: 10px;
    font-weight: 400;
    color: #6b7496;
}

.more {
    display: flex;
    align-items: center;
    gap: 5px;
    font-size: 9px;
    font-weight: 500;
    color: #1f66f5;
}

.more svg {
    width: 6px;
    height: 10px;
}

.more.plain {
    margin-right: 7px;
}

/* kpi */
.kpis {
    display: grid;
    grid-template-columns: 220fr 225fr 223fr 225fr 225fr 239fr;
    gap: 12px;
}

.kpi {
    display: flex;
    align-items: flex-start;
    gap: 21px;
    padding: 8px 0 9px 35px;
}

.kpi:first-child {
    gap: 30px;
    padding-left: 22px;
}

.kpi-text {
    width: 100px;
    white-space: nowrap;
}

.kpi h2 {
    display: flex;
    align-items: center;
    justify-content: center;
    gap: 10px;
    font-size: 11px;
    line-height: 16px;
    font-weight: 500;
    color: #2f3a66;
}

.hint {
    width: 10px;
    height: 10px;
    color: #c3cbdf;
}

.kpi-num {
    display: flex;
    align-items: baseline;
    justify-content: center;
    gap: 7px;
    height: 24px;
    margin-top: 4px;
    line-height: 24px;
    color: #5a648a;
}

.kpi-num.percent {
    gap: 2px;
}

.kpi-num b {
    font-size: 21px;
    font-weight: 500;
    color: #0b1c5c;
}

.delta {
    font-size: 9px;
    color: #626c90;
    white-space: nowrap;
}

.delta span {
    margin-left: 11px;
    font-weight: 500;
}

.kpi .delta {
    display: flex;
    justify-content: center;
    margin-top: 8px;
}

.kpi-icon {
    width: 46px;
    height: 46px;
    margin-top: 5px;
}

/* middle */
.middle {
    display: grid;
    grid-template-columns: 343fr 1064fr;
    gap: 13px;
}

.left-col,
.right-col {
    display: flex;
    flex-direction: column;
    min-width: 0;
}

.left-col { gap: 13px; }
.right-col { gap: 12px; }

.grow { flex: 1; }

.row-map {
    display: grid;
    grid-template-columns: 530fr 520fr;
    gap: 14px;
    min-height: 313px;
}

.row-service {
    display: grid;
    grid-template-columns: 471fr 581fr;
    gap: 12px;
}

.category {
    display: flex;
    align-items: center;
    gap: 26px;
    margin: 16px 0 14px 7px;
}

.ring-box {
    position: relative;
}

.ring-text {
    position: absolute;
    inset: 0;
    display: flex;
    flex-direction: column;
    align-items: center;
    justify-content: center;
    color: #3b4672;
    white-space: nowrap;
}

.ring-text b {
    font-size: 15px;
    line-height: 22px;
    font-weight: 500;
    color: #0b1c5c;
}

.ring-text .mid {
    font-size: 14px;
    line-height: 20px;
}

.ring-text.three span,
.ring-text.three small {
    font-size: 9px;
    font-weight: 400;
    color: #3b4672;
}

.ring-text.three p {
    margin-top: 4px;
    font-size: 9px;
    line-height: 16px;
}

.legend li {
    display: flex;
    align-items: center;
    height: 27px;
    white-space: nowrap;
}

.legend b {
    font-weight: 500;
    color: #13235f;
    text-align: right;
}

.legend em {
    color: #6b7496;
    text-align: right;
}

.category .legend span { width: 52px; }
.category .legend b { width: 38px; }
.category .legend em { width: 40px; }

.sq {
    width: 8px;
    height: 8px;
    margin-right: 12px;
}

.tabs {
    display: flex;
    height: 26px;
    border-bottom: 1px solid #edf1fa;
    white-space: nowrap;
}

.tabs button {
    height: 26px;
    border-bottom: 2px solid transparent;
    color: #5a648a;
}

.tabs-count {
    gap: 28px;
    margin: 9px 0 4px 2px;
}

.tabs-count b {
    margin: 0 2px;
    font-size: 12px;
    font-weight: 500;
}

.tabs-count .active {
    color: #13235f;
    font-weight: 500;
    border-color: #2f6ff0;
}

.tabs-order {
    gap: 17px;
    margin: 12px 0 8px;
}

.tabs-order button {
    padding: 0 2px;
}

.tabs-order .active {
    color: #1268fb;
    font-weight: 500;
    border-color: #1268fb;
}

/* tables */
.table {
    width: 100%;
    table-layout: fixed;
    border-collapse: separate;
    border-spacing: 0;
    white-space: nowrap;
}

.table th,
.table td {
    padding: 0 0 0 6px;
    text-align: left;
}

.table th {
    font-weight: 500;
    color: #1f2d68;
    background-color: #f3f6fd;
}

.table td {
    border-bottom: 1px solid #eef3fb;
}

.table tr:last-child td {
    border-bottom: none;
}

.emergency th { height: 27px; }
.emergency td { height: 35px; }
.emergency th:last-child,
.emergency td:last-child { padding: 0 9px 0 0; text-align: right; }
.c-time { width: 16%; }
.c-type { width: 21%; }
.c-title { width: 25%; }
.c-prog { width: 22%; }
.c-state { width: 16%; }

.prog {
    display: flex;
    align-items: center;
    gap: 6px;
}

.prog i,
.bars i {
    display: block;
    border-radius: 2px;
    background-color: #e6eaf2;
}

.prog i {
    width: 37px;
    height: 4px;
}

.prog s,
.bars s {
    display: block;
    height: 100%;
    border-radius: 2px;
}

.orders th { height: 30px; font-size: 11px; }
.orders td { height: 32px; }
.orders th:nth-child(5),
.orders td:nth-child(5) { padding: 0; text-align: center; }
.orders th:last-child,
.orders td:last-child { padding: 0 0 0 14px; text-align: center; }
.o-id { width: 20%; }
.o-title { width: 17%; }
.o-grid { width: 19%; }
.o-time { width: 18%; }
.o-state { width: 11%; }
.o-act { width: 15%; }

.orders button {
    width: 45px;
    height: 22px;
    border: 1px solid #dfe8f9;
    border-radius: 3px;
    background-color: #fff;
    color: #1f66f5;
    font-size: 9px;
    font-weight: 500;
}

.tight {
    padding-top: 8px;
}

.dispatch { margin-top: 2px; }
.dispatch th { height: 26px; }
.dispatch td { height: 26px; }
.d-time { width: 13%; }
.d-text { width: 37%; }
.d-obj { width: 19%; }
.d-who { width: 18%; }
.d-state { width: 13%; }

.dot {
    display: inline-block;
    width: 6px;
    height: 6px;
    border-radius: 50%;
}

.dispatch .dot {
    margin-right: 6px;
    vertical-align: 1px;
}

/* map */
.map {
    position: relative;
    overflow: hidden;
    border-radius: 6px;
    background-color: #032a62;
    color: #fff;
}

.map-canvas {
    position: absolute;
    inset: 0;
    width: 100%;
    height: 100%;
}

.roads path {
    fill: none;
    stroke: #6f92cf;
    stroke-width: 1px;
    stroke-opacity: .3;
    stroke-linejoin: round;
    vector-effect: non-scaling-stroke;
}

.roads .district {
    fill: #2a6cc0;
    fill-opacity: .2;
    stroke: #a9bfee;
    stroke-opacity: .75;
}

.roads .edge {
    stroke: #a9bfee;
    stroke-opacity: .6;
}

.roads .water {
    fill: #0640a8;
    fill-opacity: .8;
    stroke: none;
}

.roads .main {
    stroke-opacity: .48;
}

.roads .spokes {
    stroke: #c06a90;
    stroke-opacity: .5;
}

.bubble text {
    fill: #fff;
    font-size: 9px;
    font-weight: 500;
    text-anchor: middle;
}

.bubble .n {
    font-size: 12px;
}

.bubble.big text { font-size: 10px; }
.bubble.big .n { font-size: 13px; }

.bubble .o2 { fill-opacity: .25; stroke-opacity: .3; }
.bubble .o1 { fill-opacity: .4; stroke-opacity: .5; }
.bubble .core { fill-opacity: .9; }
.b-green circle { fill: #1f9a4a; stroke: #35c768; }
.b-orange circle { fill: #c9601d; stroke: #f08434; }
.b-gold circle { fill: #b88a1c; stroke: #e0b436; }
.b-red circle { fill: #d3232d; stroke: #ff4a4a; }
.b-blue circle { fill: #0a7fd4; stroke: #25a4f5; }

.map h3 {
    position: absolute;
    left: 15px;
    top: 12px;
    color: #fff;
}

.map-select {
    position: absolute;
    right: 11px;
    top: 10px;
    display: flex;
    align-items: center;
    width: 79px;
    height: 24px;
    padding: 0 8px;
    border: 1px solid #4f6d9e;
    border-radius: 3px;
    background-color: #0a2c5f;
    font-size: 9px;
    font-weight: 500;
}

.map-select .picker-arrow {
    color: #fff;
}

.map-tools {
    position: absolute;
    right: 11px;
    top: 59px;
    width: 32px;
    padding: 1px 0;
    border: 1px solid #46618f;
    border-radius: 3px;
    background-color: #1c3a6c;
}

.map-tools button {
    display: flex;
    flex-direction: column;
    align-items: center;
    justify-content: center;
    width: 100%;
    height: 44px;
    font-size: 9px;
}

.map-full {
    position: absolute;
    right: 11px;
    bottom: 14px;
    display: flex;
    align-items: center;
    justify-content: center;
    width: 32px;
    height: 33px;
    border: 1px solid #46618f;
    border-radius: 3px;
    background-color: #132f60;
}

.map-legend {
    position: absolute;
    left: 13px;
    bottom: 13px;
    display: flex;
    align-items: center;
    gap: 10px;
    height: 26px;
    padding: 0 11px 0 7px;
    border-radius: 3px;
    background-color: #0a2656;
    font-size: 9px;
    font-weight: 500;
}

.map-legend .dot {
    margin-right: 5px;
}

/* service metrics */
.service {
    padding: 10px 0 12px;
}

.service .card-head {
    padding: 0 12px 0 17px;
}

.metrics {
    display: grid;
    grid-template-columns: 133fr 139fr 140fr 168fr;
    margin-top: 15px;
}

.metric {
    height: 144px;
    padding-left: 16px;
    border-left: 1px solid #edf1f9;
}

.metric:first-child {
    border-left: none;
}

.metric h4,
.metric p {
    margin-left: 16px;
}

.metric h4 {
    font-weight: 400;
    color: #3b4672;
}

.metric-num {
    height: 22px;
    margin-top: 6px;
    line-height: 22px;
    font-size: 9px;
}

.metric-num b {
    margin-right: 5px;
    font-size: 15px;
    font-weight: 500;
    color: #0b1c5c;
}

.metric .delta {
    margin-top: 4px;
}

.metric .delta span {
    margin-left: 8px;
}

.spark {
    margin-top: 8px;
}

.spark circle { fill: currentColor; }
.spark .hollow { fill: #fff; stroke: currentColor; stroke-width: 1.500px; }
.spark .line { fill: none; stroke: currentColor; stroke-width: 1.500px; }
.spark .area { fill: currentColor; fill-opacity: .04; }
.spark .rule { fill: none; stroke: #e6ebf6; }
.s-blue { color: #0a66ff; }
.s-green { color: #14ab78; }
.s-amber { color: #ff9d0a; }
.s-purple { color: #8a2be8; }

/* bottom */
.bottom {
    display: grid;
    grid-template-columns: 229fr 378fr 379fr 400fr;
    gap: 11px;
}

.bottom .card {
    min-height: 224px;
}

.video {
    display: flex;
    align-items: center;
    gap: 17px;
    margin: 25px 0 0 2px;
}

.video .legend {
    font-size: 9px;
    margin-bottom: 8px;
}

.video .legend li { height: 26px; }
.video .sq { margin-right: 10px; }
.video .legend span { width: 26px; }
.video .legend b { width: 28px; }
.video .legend em { margin-left: 4px; }

.chart {
    width: 100%;
    overflow: visible;
}

.trend {
    margin-top: 12px;
}

.gridline { stroke: #eef1f7; }
.axis { stroke: #dde2ec; }

.ylab,
.xlab {
    fill: #5f698c;
    font-size: 10px;
    text-anchor: middle;
}

.ylab {
    font-size: 9px;
    text-anchor: end;
}

.small { font-size: 8px; }

.l-blue,
.l-green {
    fill: none;
    stroke: #0a66ff;
    stroke-width: 1.500px;
}

.l-green { stroke: #16b06a; }

.chart-legend {
    display: flex;
    justify-content: center;
    gap: 24px;
    margin: 14px 12px 0 0;
}

.chart-legend span {
    display: flex;
    align-items: center;
    gap: 6px;
}

.split {
    display: flex;
    margin-top: 22px;
}

.split-ring {
    width: 112px;
    height: 124px;
    display: flex;
    justify-content: center;
    flex: none;
}

.split-body,
.split-chart {
    flex: 1;
    min-width: 0;
    height: 143px;
    margin-left: 18px;
    padding-left: 19px;
    border-left: 1px solid #edf1f9;
}

.split-chart {
    margin-left: 16px;
    padding-left: 14px;
}

.split-chart .chart {
    margin-top: -10px;
}

.rate {
    padding-right: 6px;
}

.rate .more {
    margin-right: 14px;
}

.split-body h4 {
    font-size: 11px;
    font-weight: 400;
    color: #4c5680;
}

.bars {
    margin-top: 8px;
    padding-right: 8px;
    font-size: 9px;
}

.bars li {
    display: flex;
    align-items: center;
    justify-content: space-between;
    height: 24px;
}

.bars i {
    width: 84%;
    height: 6px;
    background-color: #dde1e9;
}
```
